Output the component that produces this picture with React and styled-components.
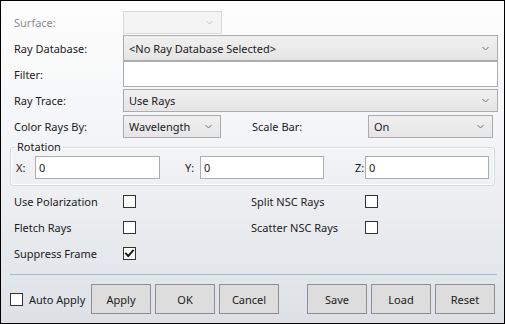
import React, { useState } from 'react';
import styled, { createGlobalStyle } from 'styled-components';

const GlobalStyle = createGlobalStyle`
  html, body {
    margin: 0;
    padding: 0;
    background: #ffffff;
  }
  * {
    box-sizing: border-box;
  }
`;

export default function App() {
  const [checks, setChecks] = useState({
    polarization: false,
    split: false,
    fletch: false,
    scatter: false,
    suppress: true,
    autoApply: false,
  });

  const toggle = (key) => {
    setChecks((prev) => ({ ...prev, [key]: !prev[key] }));
  };

  return (
    <>
      <GlobalStyle />
      <Frame>
        <FieldRow h={23} mt={0}>
          <Label disabled>Surface:</Label>
          <Combo w={99} disabled>
            <ComboText />
            <Chevron disabled />
          </Combo>
        </FieldRow>

        <FieldRow h={26} mt={1}>
          <Label>Ray Database:</Label>
          <Combo>
            <ComboText>&lt;No Ray Database Selected&gt;</ComboText>
            <Chevron />
          </Combo>
        </FieldRow>

        <FieldRow h={26} mt={0}>
          <Label>Filter:</Label>
          <TextBox />
        </FieldRow>

        <FieldRow h={23} mt={2}>
          <Label>Ray Trace:</Label>
          <Combo>
            <ComboText>Use Rays</ComboText>
            <Chevron />
          </Combo>
        </FieldRow>

        <FieldRow h={23} mt={3}>
          <Label>Color Rays By:</Label>
          <Combo w={98}>
            <ComboText>Wavelength</ComboText>
            <Chevron />
          </Combo>
          <Label w={116} ml={31} pl={0}>
            Scale Bar:
          </Label>
          <Combo w={125}>
            <ComboText>On</ComboText>
            <Chevron />
          </Combo>
        </FieldRow>

        <Group>
          <Legend>Rotation</Legend>
          <GroupRow>
            <AxisLabel ml={5} w={19}>
              X:
            </AxisLabel>
            <TextBox w={125} value="0" readOnly />
            <AxisLabel ml={25} w={15}>
              Y:
            </AxisLabel>
            <TextBox w={124} value="0" readOnly />
            <AxisLabel ml={31} w={10}>
              Z:
            </AxisLabel>
            <TextBox w={124} value="0" readOnly />
          </GroupRow>
        </Group>

        <Checks>
          <CheckRow>
            <Label>Use Polarization</Label>
            <Check checked={checks.polarization} onClick={() => toggle('polarization')} />
            <Label w={114} ml={115} pl={0}>
              Split NSC Rays
            </Label>
            <Check checked={checks.split} onClick={() => toggle('split')} />
          </CheckRow>
          <CheckRow>
            <Label>Fletch Rays</Label>
            <Check checked={checks.fletch} onClick={() => toggle('fletch')} />
            <Label w={114} ml={115} pl={0}>
              Scatter NSC Rays
            </Label>
            <Check checked={checks.scatter} onClick={() => toggle('scatter')} />
          </CheckRow>
          <CheckRow>
            <Label>Suppress Frame</Label>
            <Check checked={checks.suppress} onClick={() => toggle('suppress')} />
          </CheckRow>
        </Checks>

        <Separator />

        <ButtonBar>
          <AutoApply onClick={() => toggle('autoApply')}>
            <Check checked={checks.autoApply} />
            <AutoText>Auto Apply</AutoText>
          </AutoApply>
          <Button>Apply</Button>
          <Button>OK</Button>
          <Button>Cancel</Button>
          <Spacer />
          <Button>Save</Button>
          <Button>Load</Button>
          <Button>Reset</Button>
        </ButtonBar>
      </Frame>
    </>
  );
}

function Chevron({ disabled }) {
  return (
    <ChevronSvg width="7" height="5" viewBox="0 0 7 5" disabled={disabled}>
      <polyline points="0.5,1 3.5,4 6.5,1" fill="none" strokeWidth="1" />
    </ChevronSvg>
  );
}

function Check({ checked, onClick }) {
  return (
    <CheckBox onClick={onClick}>
      {checked && (
        <svg width="11" height="11" viewBox="0 0 11 11">
          <path
            d="M2 5.6 L4.3 8 L9 2.6"
            fill="none"
            stroke="#1c1c1c"
            strokeWidth="2"
            strokeLinecap="square"
          />
        </svg>
      )}
    </CheckBox>
  );
}

const Frame = styled.div`
  width: 505px;
  height: 324px;
  border: 1px solid #000000;
  background: linear-gradient(#fefefe 0%, #f3f4f6 45%, #dde1e6 100%);
  padding: 10px 6px 0 10px;
  display: flex;
  flex-direction: column;
  font-family: 'Noto Sans', 'Open Sans', sans-serif;
  font-size: 11px;
  color: #1b1b1b;
`;

const FieldRow = styled.div`
  display: flex;
  align-items: stretch;
  height: ${(props) => props.h}px;
  margin-top: ${(props) => props.mt}px;
`;

const Label = styled.div`
  display: flex;
  align-items: center;
  flex: none;
  width: ${(props) => props.w || 112}px;
  margin-left: ${(props) => props.ml || 0}px;
  padding-left: ${(props) => (props.pl === undefined ? 3 : props.pl)}px;
  color: ${(props) => (props.disabled ? '#8d8d8d' : '#1b1b1b')};
  white-space: nowrap;
`;

const Combo = styled.div`
  display: flex;
  align-items: center;
  flex: ${(props) => (props.w ? 'none' : '1')};
  width: ${(props) => (props.w ? `${props.w}px` : 'auto')};
  border: 1px solid ${(props) => (props.disabled ? '#d9d9d9' : '#acacac')};
  background: ${(props) =>
    props.disabled
      ? '#f4f4f4'
      : 'linear-gradient(#f0f0f0, #e5e5e5)'};
  padding: 0 8px 0 5px;
`;

const ComboText = styled.span`
  flex: 1;
  white-space: nowrap;
  overflow: hidden;
`;

const ChevronSvg = styled.svg`
  flex: none;
  stroke: ${(props) => (props.disabled ? '#c4c4c4' : '#707070')};
`;

const TextBox = styled.input.attrs({ type: 'text' })`
  flex: ${(props) => (props.w ? 'none' : '1')};
  width: ${(props) => (props.w ? `${props.w}px` : 'auto')};
  min-width: 0;
  height: ${(props) => (props.w ? '23px' : 'auto')};
  margin: 0;
  border: 1px solid #abadb3;
  background: #ffffff;
  padding: 0 3px;
  font: inherit;
  color: #1b1b1b;
  outline: none;
`;

const Group = styled.fieldset`
  width: 485px;
  margin: 1px 0 0 -1px;
  padding: 1px 0 6px 0;
  border: 1px solid #d2dbe1;
  border-radius: 3px;
  box-shadow: inset 0 0 0 1px #ffffff;
`;

const Legend = styled.legend`
  margin-left: 4px;
  padding: 0 2px;
  line-height: 16px;
  color: #1b1b1b;
`;

const GroupRow = styled.div`
  display: flex;
  align-items: center;
`;

const AxisLabel = styled.span`
  flex: none;
  width: ${(props) => props.w}px;
  margin-left: ${(props) => props.ml}px;
  white-space: nowrap;
`;

const Checks = styled.div`
  display: flex;
  flex-direction: column;
  margin-top: 2px;
`;

const CheckRow = styled.div`
  display: flex;
  align-items: center;
  height: 26px;
`;

const CheckBox = styled.div`
  flex: none;
  width: 13px;
  height: 13px;
  border: 1px solid #333333;
  background: #ffffff;
  display: flex;
  align-items: center;
  justify-content: center;
  cursor: pointer;
`;

const Separator = styled.div`
  height: 1px;
  margin: 8px 0 0 -1px;
  width: 487px;
  background: #9fbccb;
`;

const ButtonBar = styled.div`
  display: flex;
  align-items: center;
  gap: 4px;
  margin: 9px 3px 0 -1px;
  height: 30px;
`;

const AutoApply = styled.div`
  display: flex;
  align-items: center;
  width: 77px;
  cursor: pointer;
`;

const AutoText = styled.span`
  margin-left: 6px;
  white-space: nowrap;
`;

const Spacer = styled.div`
  flex: 1;
`;

const Button = styled.button`
  flex: none;
  width: 60px;
  height: 30px;
  margin: 0;
  border: 1px solid #8e8e8e;
  background: #dddddd;
  font: inherit;
  color: #1b1b1b;
  padding: 0;
`;
